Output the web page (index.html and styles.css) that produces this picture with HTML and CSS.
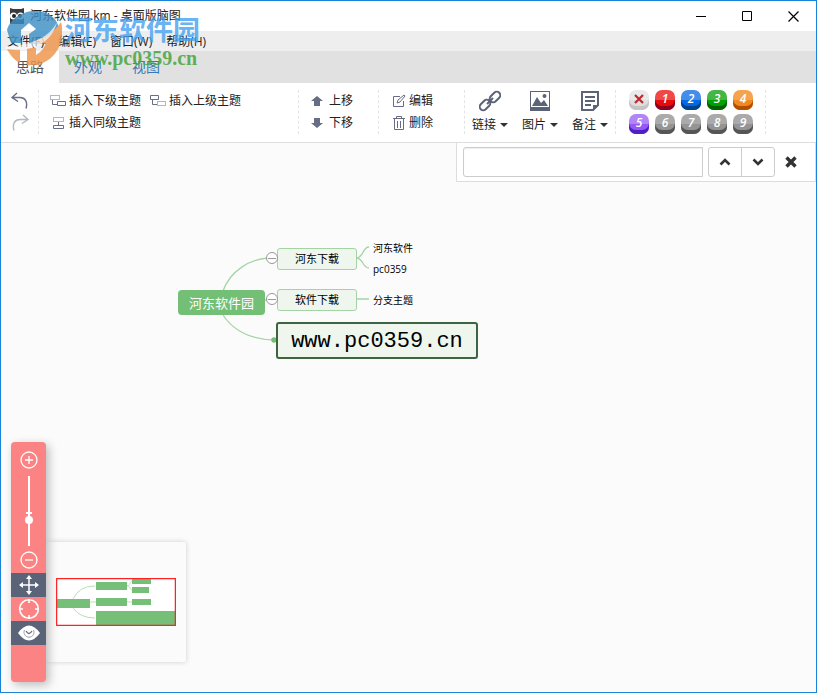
FILE: index.html
```html
<!DOCTYPE html>
<html lang="zh-CN">
<head>
<meta charset="utf-8">
<title>河东软件园.km - 桌面版脑图</title>
<link rel="stylesheet" href="styles.css">
</head>
<body>
<div class="window">
  <header class="titlebar">
    <svg class="app-icon" width="16" height="16" viewBox="0 0 16 16" aria-hidden="true"><path fill="#3b3b3d" d="M1 0l3 1h8l3-1v16H1z"/><circle cx="4.500" cy="8" r="3.500" fill="#fff"/><circle cx="11.500" cy="8" r="3.500" fill="#fff"/><circle cx="5" cy="8" r="2" fill="#222"/><circle cx="11" cy="8" r="2" fill="#222"/><path d="M7 10h2l-1 3z" fill="#eee"/></svg>
    <h1 class="title">河东软件园.km - 桌面版脑图</h1>
    <div class="window-buttons">
      <button aria-label="最小化"><svg width="11" height="11" viewBox="0 0 11 11"><path d="M0 5.500h10" stroke="#000"/></svg></button>
      <button aria-label="最大化"><svg width="11" height="11" viewBox="0 0 11 11"><path d="M.5.500h9v9h-9z" fill="none" stroke="#000"/></svg></button>
      <button aria-label="关闭"><svg width="11" height="11" viewBox="0 0 11 11"><path d="M.5.500l10 10M10.500.500l-10 10" stroke="#000" stroke-width="1.200"/></svg></button>
    </div>
  </header>

  <nav class="menubar">
    <button>文件(F)</button><button>编辑(E)</button><button>窗口(W)</button><button>帮助(H)</button>
  </nav>

  <nav class="tabs">
    <a class="tab active" href="#idea">思路</a><a class="tab" href="#look">外观</a><a class="tab" href="#view">视图</a>
  </nav>

  <div class="toolbar">
    <div class="group history">
      <button class="tool" aria-label="撤销"><svg width="18" height="18" viewBox="0 0 18 18" fill="none" stroke="#666d84" stroke-width="1.400"><path d="M6 1L1 5.500l6 4M1 5.500h8c5 0 8 4 6 11"/></svg></button>
      <button class="tool" aria-label="重做"><svg width="18" height="18" viewBox="0 0 18 18" fill="none" stroke="#b5b8c3" stroke-width="1.400"><path d="M12 1l5 4.500-6 4M17 5.500H9c-5 0-8 4-6 11"/></svg></button>
    </div>
    <div class="group insert">
      <button class="tool"><svg width="17" height="14" viewBox="0 0 17 14" fill="none" stroke="#666d84"><path d="M.5 1.500h9v4h-9z" stroke-dasharray="1 1"/><path d="M2.500 6v4.500H7M7.500 7.500h8v4h-8z"/></svg>插入下级主题</button>
      <button class="tool"><svg width="17" height="14" viewBox="0 0 17 14" fill="none" stroke="#666d84"><path d="M.5 1.500h8v4h-8zM2.500 6v4.500H7"/><path d="M7.500 7.500h8v4h-8z" stroke-dasharray="1 1"/></svg>插入上级主题</button>
      <button class="tool"><svg width="17" height="14" viewBox="0 0 17 14" fill="none" stroke="#666d84"><path d="M3.500 1.500h10v4h-10z" stroke-dasharray="1 1"/><path d="M8.500 6v3M3.500 9.500h10v3h-10z"/></svg>插入同级主题</button>
    </div>
    <div class="group move">
      <button class="tool"><svg width="12" height="12" viewBox="0 0 12 12" fill="#666d84"><path d="M6 1l6 5H9v5H3V6H0z"/></svg>上移</button>
      <button class="tool"><svg width="12" height="12" viewBox="0 0 12 12" fill="#666d84"><path d="M6 11l6-5H9V1H3v5H0z"/></svg>下移</button>
    </div>
    <div class="group edit">
      <button class="tool"><svg width="14" height="14" viewBox="0 0 14 14" fill="none" stroke="#666d84"><path d="M8 2.500H1.500v10h10V7M5 9l1-3 6-5 1 1-5 6z"/></svg>编辑</button>
      <button class="tool"><svg width="14" height="16" viewBox="0 0 14 16" fill="none" stroke="#666d84"><path d="M1 3.500h12M4.500 3V1.500h5V3M2.500 4v10.500h9V4M5.500 6v7M8.500 6v7"/></svg>删除</button>
    </div>
    <div class="group media">
      <button class="big"><svg width="22" height="22" viewBox="0 0 22 22" fill="none" stroke="#5b6379" stroke-width="2"><rect x="10" y="3.500" width="12" height="7" rx="3.500" transform="rotate(-45 16 7)"/><rect x="0" y="11.500" width="12" height="7" rx="3.500" transform="rotate(-45 6 15)"/><path d="M8 14l6-6"/></svg><span class="caption">链接<i class="caret"></i></span></button>
      <button class="big"><svg width="22" height="22" viewBox="0 0 22 22" fill="#5b6379"><path d="M1 1h20v20H1zM2 2v15h18V2z" fill-rule="evenodd"/><path d="M3 16l5-9 4 6 3-3 4 6z"/><circle cx="15.500" cy="6" r="2"/></svg><span class="caption">图片<i class="caret"></i></span></button>
      <button class="big"><svg width="22" height="22" viewBox="0 0 22 22" fill="none" stroke="#5b6379" stroke-width="2"><path d="M3 2h16v13l-5 5H3zM6 7h10M6 11h10M6 15h6"/><path d="M14 21v-6h6z" fill="#5b6379" stroke="none"/></svg><span class="caption">备注<i class="caret"></i></span></button>
    </div>
    <div class="group priority">
      <button class="prio p0" aria-label="移除优先级"><svg width="10" height="10" viewBox="0 0 10 10"><path d="M1 1l8 8M9 1L1 9" stroke="#c1272d" stroke-width="2.200"/></svg></button>
      <button class="prio p1">1</button><button class="prio p2">2</button><button class="prio p3">3</button><button class="prio p4">4</button>
      <button class="prio p5">5</button><button class="prio">6</button><button class="prio">7</button><button class="prio">8</button><button class="prio">9</button>
    </div>
  </div>

  <main class="canvas">
    <form class="search">
      <input type="text" aria-label="搜索">
      <div class="steps">
        <button type="button" aria-label="上一个"><svg width="12" height="8" viewBox="0 0 12 8"><path d="M1.500 6.500L6 2l4.500 4.500" fill="none" stroke="#333" stroke-width="2.600"/></svg></button><button type="button" aria-label="下一个"><svg width="12" height="8" viewBox="0 0 12 8"><path d="M1.500 1.500L6 6l4.500-4.500" fill="none" stroke="#333" stroke-width="2.600"/></svg></button>
      </div>
      <button class="close" type="button" aria-label="关闭搜索"><svg width="12" height="12" viewBox="0 0 12 12"><path d="M1.500 1.500l9 9M10.500 1.500l-9 9" stroke="#333" stroke-width="3.400"/></svg></button>
    </form>

    <div class="map">
      <svg class="links" width="310" height="120" viewBox="0 0 310 120" fill="none" stroke="#a4d4a5" stroke-width="1.300">
        <path d="M45 52C52 32 72 20 90 19M86 61h8M45 76Q61 100 96 101M178 19c8 0 6-11 13-11M178 19c8 0 6 10 13 10M178 60h13"/>
        <circle cx="96" cy="101" r="2.700" fill="#73bf76" stroke="none"/>
      </svg>
      <div class="node root">河东软件园</div>
      <div class="node main n1">河东下载</div>
      <div class="node main n2">软件下载</div>
      <div class="node selected">www.pc0359.cn</div>
      <div class="node leaf l1">河东软件</div>
      <div class="node leaf l2">pc0359</div>
      <div class="node leaf l3">分支主题</div>
      <button class="fold f1" aria-label="收起河东下载"></button>
      <button class="fold f2" aria-label="收起软件下载"></button>
    </div>

    <div class="preview">
      <svg width="120" height="48" viewBox="0 0 120 48">
        <path d="M1 1h118v46H1z" fill="#fff"/>
        <path d="M17 21Q23 8 39 8M34 24h6M17 30Q24 40 39 40M71 8c4 0 2-5 6-5M71 8c4 0 2 4 6 4M71 24h6" fill="none" stroke="#b9ddba"/>
        <path fill="#75bf78" d="M1 21h33v9H1zM40 4h31v8H40zM40 20h31v8H40zM40 33h79v14H40zM76 1h19v5H76zM76 9h17v6H76zM76 21h19v6H76z"/>
        <path d="M.5.500h119v47H.5z" fill="none" stroke="#f22" stroke-width="1.500"/>
      </svg>
    </div>

    <aside class="navigator">
      <button class="zoom" aria-label="放大"><svg width="18" height="18" viewBox="0 0 18 18" fill="none" stroke="#fff" stroke-width="1.300"><circle cx="9" cy="9" r="8"/><path d="M5 9h8M9 5v8"/></svg></button>
      <div class="slide"><input type="range" min="0" max="100" value="35" aria-label="缩放"></div>
      <button class="zoom" aria-label="缩小"><svg width="18" height="18" viewBox="0 0 18 18" fill="none" stroke="#fff" stroke-width="1.300"><circle cx="9" cy="9" r="8"/><path d="M5 9h8"/></svg></button>
      <button class="nav-tool on" aria-label="拖动"><svg width="20" height="20" viewBox="0 0 20 20" fill="#fff"><path d="M2 10h16M10 2v16" stroke="#fff" stroke-width="1.500"/><path d="M10 0l3 4H7zM10 20l3-4H7zM0 10l4-3v6zM20 10l-4-3v6z"/></svg></button>
      <button class="nav-tool" aria-label="定位根节点"><svg width="22" height="22" viewBox="0 0 22 22" fill="none" stroke="#fff" stroke-width="1.600"><circle cx="11" cy="11" r="9.300"/><path d="M11 1v4M11 17v4M1 11h4M17 11h4"/></svg></button>
      <button class="nav-tool on" aria-label="导航器"><svg width="22" height="16" viewBox="0 0 22 16"><path d="M0 8Q11-7 22 8Q11 23 0 8z" fill="#fff"/><path d="M6.500 5a5 5 0 1 0 9 0" fill="none" stroke="#9a9fad"/><path d="M8 6q3 5 6 0" fill="none" stroke="#5b6379" stroke-width="1.300"/></svg></button>
    </aside>
  </main>

  <div class="watermark">
    <svg width="58" height="58" viewBox="0 0 58 58" opacity=".82">
      <path d="M3 19C6 8 18 0 31 0 45 0 55 8 55 20c0 8-4 12-12 13H25V23l7-5-7-6-8 7v13H7z" fill="#3d8fc4"/>
      <path d="M3 38h13v14Q8 48 3 38zM27 31l15-5Q50 21 57 11C63 34 47 57 23 54V37h9v7q8-5 10-12z" fill="#f0944a"/>
      <path d="M2 35c15 1 42-5 51-24-6 25-32 31-51 27z" fill="#fff" opacity=".7"/>
    </svg>
    <div class="mark-text"><span class="mark-name">河东软件园</span><span class="mark-url">www.pc0359.cn</span></div>
  </div>
</div>
</body>
</html>
```
FILE: styles.css
```css
* { box-sizing: border-box; }

body {
  margin: 0;
  font: 12px/16px "Open Sans", "Noto Sans CJK SC", sans-serif;
  color: #222;
}

button {
  padding: 0;
  border: 0;
  background: none;
  color: inherit;
  font: inherit;
}

svg { flex: none; }

.window {
  position: relative;
  display: flex;
  flex-direction: column;
  min-height: 100vh;
  border: 1px solid #1883d7;
  background: #fff;
}

.titlebar {
  display: flex;
  align-items: center;
  height: 30px;
  padding-left: 8px;
}

.title {
  flex: 1;
  margin: 0 0 0 5px;
  font-size: 12px;
  font-weight: 400;
}

.window-buttons { display: flex; }
.window-buttons button { display: grid; place-items: center; width: 46px; height: 30px; }

.menubar {
  display: flex;
  gap: 14px;
  height: 20px;
  padding: 2px 0 0 6px;
  background: #eee;
}

.tabs { display: flex; height: 32px; background: #e1e1e1; }
.tab {
  width: 58px;
  color: #337ab7;
  font-size: 14px;
  line-height: 32px;
  text-align: center;
  text-decoration: none;
}
.tab.active { background: #fff; color: #555; }

.toolbar {
  display: flex;
  padding: 7px 0 8px;
  border-bottom: 1px solid #ddd;
}

.group {
  display: flex;
  flex-wrap: wrap;
  align-content: flex-start;
  height: 44px;
  border-right: 1px dashed #e4e4e4;
}
.history { width: 38px; padding-left: 10px; }
.insert { width: 260px; padding-left: 11px; column-gap: 9px; }
.move { width: 80px; padding-left: 12px; }
.edit { width: 86px; padding-left: 13px; }
.media { width: 151px; padding-left: 7px; gap: 14px; }
.priority { width: 150px; padding-left: 13px; gap: 4px 6px; }

.tool { display: flex; align-items: center; gap: 2px; height: 22px; }
.move .tool { gap: 6px; }
.edit .tool { gap: 3px; }

.big { display: flex; flex-direction: column; align-items: center; gap: 5px; width: 36px; }
.caption { display: flex; align-items: center; gap: 4px; white-space: nowrap; }
.caret { border: 4px solid transparent; border-top-color: #333; border-bottom: 0; }

.prio {
  display: grid;
  place-items: center;
  width: 20px;
  height: 20px;
  padding-bottom: 3px;
  border-radius: 7px;
  background: linear-gradient(var(--top, #aaa) 50%, var(--face, #949494) 50%);
  box-shadow: inset 0 -4px var(--edge, #555);
  color: #fff;
  font: italic 600 12px/16px "Open Sans", sans-serif;
}
.p0 { --top: #e9e9e9; --face: #dedede; --edge: #c4c4c4; }
.p1 { --top: #f04848; --face: #e60c0c; --edge: #8c0020; }
.p2 { --top: #448de9; --face: #006be5; --edge: #00428c; }
.p3 { --top: #43b643; --face: #00a100; --edge: #006300; }
.p4 { --top: #f5a34d; --face: #f28822; --edge: #b35000; }
.p5 { --top: #b184f7; --face: #9757f3; --edge: #4b20c4; }

.canvas { position: relative; flex: 1; min-height: 540px; background: #fbfbfb; }

.search {
  display: flex;
  align-items: center;
  width: 360px;
  height: 39px;
  margin-left: auto;
  padding-left: 6px;
  border: 1px solid #ddd;
  border-top: 0;
  background: #fff;
}
.search input {
  width: 240px;
  height: 30px;
  border: 1px solid #ccc;
  border-radius: 3px 0 0 3px;
  box-shadow: inset 0 1px 1px #eee;
}
.steps { display: flex; margin-left: 5px; border: 1px solid #ccc; border-radius: 3px; }
.steps button { display: grid; place-items: center; width: 32px; height: 28px; }
.steps button + button { width: 33px; border-left: 1px solid #ccc; }
.close { display: grid; place-items: center; width: 32px; height: 30px; }

.map { position: absolute; left: 177px; top: 96px; width: 310px; height: 120px; }
.links { position: absolute; left: 0; top: 0; }
.node { position: absolute; display: grid; place-items: center; color: #000; white-space: nowrap; }
.root {
  left: 0;
  top: 51px;
  width: 87px;
  height: 25px;
  border-radius: 4px;
  background: #73bf76;
  color: #fff;
  font-size: 13px;
}
.main {
  left: 99px;
  width: 80px;
  height: 22px;
  border: 1px solid #a4d4a5;
  border-radius: 3px;
  background: #eef6ee;
  font-size: 11px;
}
.n1 { top: 9px; }
.n2 { top: 50px; }
.selected {
  left: 98px;
  top: 83px;
  width: 202px;
  height: 37px;
  padding-top: 3px;
  border: 2px solid #3d6540;
  border-radius: 3px;
  background: #eef6ee;
  font: 22px/30px "Liberation Mono", monospace;
}
.leaf { left: 195px; font-size: 10px; }
.l1 { top: 1px; }
.l2 { top: 22px; }
.l3 { top: 53px; }
.fold {
  position: absolute;
  left: 88px;
  width: 12px;
  height: 12px;
  border: 1px solid #999;
  border-radius: 50%;
  background: linear-gradient(#999, #999) center / 8px 1px no-repeat #fff;
}
.f1 { top: 13px; }
.f2 { top: 54px; }

.preview {
  position: absolute;
  left: 45px;
  bottom: 30px;
  display: grid;
  place-items: center;
  width: 140px;
  height: 120px;
  border-radius: 2px;
  background: #fbfbfb;
  box-shadow: 0 0 5px #ccc;
}

.navigator {
  position: absolute;
  left: 10px;
  bottom: 10px;
  display: flex;
  flex-direction: column;
  align-items: center;
  width: 35px;
  height: 240px;
  padding-top: 8px;
  border-radius: 4px;
  background: #fc8383;
  box-shadow: 3px 3px 10px #bbb;
}
.zoom { display: grid; place-items: center; width: 20px; height: 20px; }
.slide {
  height: 70px;
  margin: 6px 0 4px;
  background: linear-gradient(#fff, #fff) center 36px / 6px 2px no-repeat;
}
.slide input {
  display: block;
  width: 8px;
  height: 70px;
  margin: 0;
  appearance: none;
  background: none;
  writing-mode: vertical-lr;
  direction: rtl;
}
.slide input::-webkit-slider-runnable-track {
  width: 8px;
  height: 70px;
  background: linear-gradient(#fff, #fff) center / 2px 70px no-repeat;
}
.slide input::-webkit-slider-thumb {
  width: 8px;
  height: 8px;
  appearance: none;
  border-radius: 50%;
  background: #fff;
}
.nav-tool { display: grid; place-items: center; width: 35px; height: 24px; }
.zoom + .nav-tool { margin-top: 3px; }
.nav-tool.on { background: #5b6379; }

.watermark {
  position: absolute;
  left: 3px;
  top: 10px;
  display: flex;
  gap: 3px;
  pointer-events: none;
}
.mark-text { display: flex; flex-direction: column; }
.mark-name {
  color: rgba(65, 160, 240, .8);
  font: 700 27px/36px "Noto Sans CJK SC", sans-serif;
}
.mark-url {
  color: rgba(70, 165, 60, .85);
  font: 700 20px/22px "Liberation Serif", serif;
}
```
